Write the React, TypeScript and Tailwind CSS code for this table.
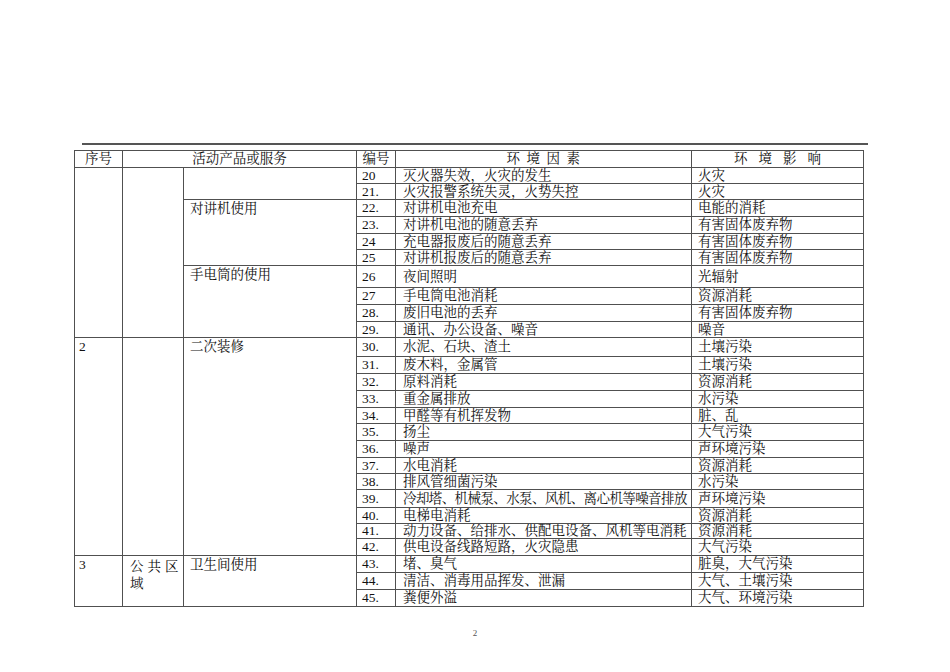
import React from 'react'

type Row = {
  no: string
  factor: string
  impact: string
  h: string
  tight?: boolean
}

const rows: Row[] = [
  { no: '20', factor: '灭火器失效，火灾的发生', impact: '火灾', h: 'h-[16px]' },
  { no: '21.', factor: '火灾报警系统失灵，火势失控', impact: '火灾', h: 'h-[16px]' },
  { no: '22.', factor: '对讲机电池充电', impact: '电能的消耗', h: 'h-[17px]' },
  { no: '23.', factor: '对讲机电池的随意丢弃', impact: '有害固体废弃物', h: 'h-[17px]' },
  { no: '24', factor: '充电器报废后的随意丢弃', impact: '有害固体废弃物', h: 'h-[16px]' },
  { no: '25', factor: '对讲机报废后的随意丢弃', impact: '有害固体废弃物', h: 'h-[16px]' },
  { no: '26', factor: '夜间照明', impact: '光辐射', h: 'h-[22px]' },
  { no: '27', factor: '手电筒电池消耗', impact: '资源消耗', h: 'h-[17px]' },
  { no: '28.', factor: '废旧电池的丢弃', impact: '有害固体废弃物', h: 'h-[17px]' },
  { no: '29.', factor: '通讯、办公设备、噪音', impact: '噪音', h: 'h-[16px]' },
  { no: '30.', factor: '水泥、石块、渣土', impact: '土壤污染', h: 'h-[19px]' },
  { no: '31.', factor: '废木料，金属管', impact: '土壤污染', h: 'h-[17px]' },
  { no: '32.', factor: '原料消耗', impact: '资源消耗', h: 'h-[17px]' },
  { no: '33.', factor: '重金属排放', impact: '水污染', h: 'h-[17px]' },
  { no: '34.', factor: '甲醛等有机挥发物', impact: '脏、乱', h: 'h-[16px]' },
  { no: '35.', factor: '扬尘', impact: '大气污染', h: 'h-[17px]' },
  { no: '36.', factor: '噪声', impact: '声环境污染', h: 'h-[17px]' },
  { no: '37.', factor: '水电消耗', impact: '资源消耗', h: 'h-[16px]' },
  { no: '38.', factor: '排风管细菌污染', impact: '水污染', h: 'h-[16px]' },
  { no: '39.', factor: '冷却塔、机械泵、水泵、风机、离心机等噪音排放', impact: '声环境污染', h: 'h-[18px]', tight: true },
  { no: '40.', factor: '电梯电消耗', impact: '资源消耗', h: 'h-[16px]' },
  { no: '41.', factor: '动力设备、给排水、供配电设备、风机等电消耗', impact: '资源消耗', h: 'h-[15px]' },
  { no: '42.', factor: '供电设备线路短路，火灾隐患', impact: '大气污染', h: 'h-[17px]' },
  { no: '43.', factor: '堵、臭气', impact: '脏臭，大气污染', h: 'h-[17px]' },
  { no: '44.', factor: '清洁、消毒用品挥发、泄漏', impact: '大气、土壤污染', h: 'h-[17px]' },
  { no: '45.', factor: '粪便外溢', impact: '大气、环境污染', h: 'h-[17px]' },
]

// merged cells on the left: row index -> [rowSpan, content]
const seqCells: Record<number, [number, React.ReactNode]> = {
  0: [10, ''],
  10: [13, '2'],
  23: [3, '3'],
}
const areaCells: Record<number, [number, React.ReactNode]> = {
  0: [10, ''],
  10: [13, ''],
  23: [3, (
    <>
      <span className="whitespace-nowrap tracking-[4px]">公共区</span>
      <br />
      域
    </>
  )],
}
const activityCells: Record<number, [number, React.ReactNode]> = {
  0: [2, ''],
  2: [4, '对讲机使用'],
  6: [4, '手电筒的使用'],
  10: [13, '二次装修'],
  23: [3, '卫生间使用'],
}

const cell = 'border border-[#505050] align-middle whitespace-nowrap overflow-hidden'
const merged = 'border border-[#505050] align-top'

export default function App() {
  return (
    <div
      className="w-[950px] h-[672px] bg-white text-[#111] pt-[143px]"
      style={{ fontFamily: '"Liberation Serif", "Noto Serif CJK SC", "Noto Sans CJK SC", serif' }}
    >
      <div className="ml-[82px] w-[786px] h-[2px] bg-[#555]" />

      <table className="ml-[74px] mt-[5px] w-[789px] table-fixed border-collapse text-[13.5px] leading-[14px]">
        <colgroup>
          <col className="w-[48px]" />
          <col className="w-[61px]" />
          <col className="w-[173px]" />
          <col className="w-[39px]" />
          <col className="w-[296px]" />
          <col className="w-[172px]" />
        </colgroup>
        <thead>
          <tr className="h-[17px]">
            <th className={`${cell} font-normal text-center`}>序号</th>
            <th colSpan={2} className={`${cell} font-normal text-center`}>活动产品或服务</th>
            <th className={`${cell} font-normal text-center`}>编号</th>
            <th className={`${cell} font-normal text-center`}>
              <span className="tracking-[6.5px] pl-[6px]">环境因素</span>
            </th>
            <th className={`${cell} font-normal text-center`}>
              <span className="tracking-[11px] pl-[11px]">环境影响</span>
            </th>
          </tr>
        </thead>
        <tbody>
          {rows.map((r, i) => (
            <tr key={r.no} className={r.h}>
              {seqCells[i] && (
                <td rowSpan={seqCells[i][0]} className={`${merged} pl-[4px] pt-[2px]`}>
                  {seqCells[i][1]}
                </td>
              )}
              {areaCells[i] && (
                <td rowSpan={areaCells[i][0]} className={`${merged} pl-[7px] pt-[2px] leading-[17px]`}>
                  {areaCells[i][1]}
                </td>
              )}
              {activityCells[i] && (
                <td rowSpan={activityCells[i][0]} className={`${merged} pl-[6px] pt-[2px]`}>
                  {activityCells[i][1]}
                </td>
              )}
              <td className={`${cell} pl-[5px]`}>{r.no}</td>
              <td className={`${cell} pl-[7px] ${r.tight ? 'tracking-[-0.6px]' : ''}`}>{r.factor}</td>
              <td className={`${cell} pl-[6px]`}>{r.impact}</td>
            </tr>
          ))}
        </tbody>
      </table>

      <div className="mt-[20px] text-center text-[9px] text-[#555]">2</div>
    </div>
  )
}
